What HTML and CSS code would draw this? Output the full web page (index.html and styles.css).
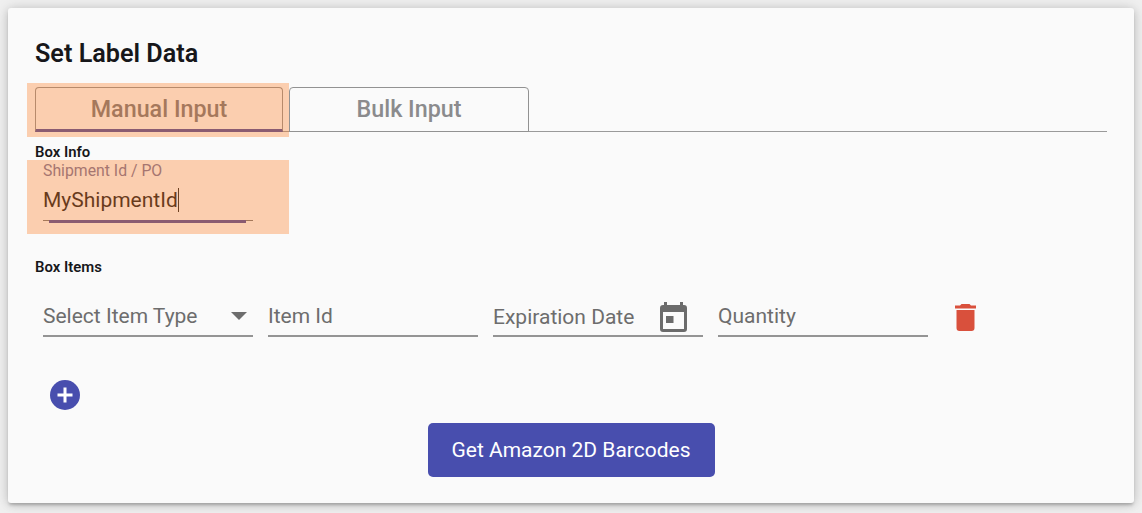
FILE: index.html
```
<!DOCTYPE html>
<html lang="en">
<head>
  <meta charset="utf-8">
  <title>Set Label Data</title>
  <link rel="stylesheet" href="styles.css">
</head>
<body>
  <main class="card">
    <h1>Set Label Data</h1>

    <div class="tabs">
      <div class="tab-slot highlight">
        <button type="button" class="tab active">Manual Input</button>
      </div>
      <button type="button" class="tab">Bulk Input</button>
    </div>

    <h2>Box Info</h2>
    <div class="shipment highlight">
      <span class="float-label">Shipment Id / PO</span>
      <div class="shipment-value"><span>MyShipmentId</span><i class="caret"></i></div>
      <div class="focus-line"></div>
    </div>

    <h2 class="items-title">Box Items</h2>
    <div class="item-row">
      <div class="field">
        <span>Select Item Type</span>
        <i class="arrow"></i>
      </div>
      <div class="field"><span>Item Id</span></div>
      <div class="field field-date">
        <span>Expiration Date</span>
        <svg class="calendar" viewBox="0 0 27 30">
          <path fill-rule="evenodd" d="M4 0h3v3h13V0h3v3h1a3 3 0 0 1 3 3v21a3 3 0 0 1-3 3H3a3 3 0 0 1-3-3V6a3 3 0 0 1 3-3h1zM3 10v17h21V10zM6 14h7.500v7H6z"/>
        </svg>
      </div>
      <div class="field"><span>Quantity</span></div>
      <svg class="trash" viewBox="0 0 21 27">
        <path d="M6.500 0h8l1.500 1.500h5v3H0v-3h5zM1.500 6h18v18a3 3 0 0 1-3 3h-12a3 3 0 0 1-3-3z"/>
      </svg>
    </div>

    <svg class="add" viewBox="0 0 30 30">
      <circle cx="15" cy="15" r="15"/>
      <path d="M15 7.500v15M7.500 15h15"/>
    </svg>

    <button type="button" class="submit">Get Amazon 2D Barcodes</button>
  </main>
</body>
</html>
```

FILE: styles.css
```
* {
  box-sizing: border-box;
}

body {
  margin: 0;
  height: 513px;
  padding: 8px;
  overflow: hidden;
  background-color: #f0f0f0;
  font-family: Roboto, "Liberation Sans", sans-serif;
  color: #17171a;
}

button {
  font-family: inherit;
  padding: 0;
}

.card {
  display: flex;
  flex-direction: column;
  align-items: flex-start;
  width: 1126px;
  height: 495px;
  padding: 30px 27px 0;
  background-color: #fafafa;
  border-radius: 3px;
  box-shadow: 0 3px 3px -1px rgba(0, 0, 0, 0.2), 0 2px 8px rgba(0, 0, 0, 0.14), 0 0 16px rgba(0, 0, 0, 0.12);
}

h1 {
  margin: 0;
  font-size: 25.200px;
  line-height: 32px;
  font-weight: 600;
}

h2 {
  margin: 11px 0 0;
  font-size: 14.900px;
  line-height: 18px;
  font-weight: 600;
}

/* Orange marker drawn over the steps to follow */
.highlight {
  position: relative;
}

.highlight::after {
  content: "";
  position: absolute;
  background-color: rgba(252, 122, 33, 0.35);
}

.tabs {
  display: flex;
  width: 1072px;
  height: 45px;
  margin-top: 17px;
  border-bottom: 1px solid #9a9a9a;
}

.tab-slot {
  width: 248px;
  margin-right: 6px;
}

.tab-slot::after {
  top: -4px;
  left: -8px;
  width: 262px;
  height: 54px;
}

.tab {
  width: 240px;
  height: 45px;
  padding-bottom: 1px;
  background-color: transparent;
  border: 1px solid #929292;
  border-radius: 4px 4px 0 0;
  color: #8b8b8d;
  font-size: 23.300px;
  font-weight: 500;
}

.active {
  width: 248px;
  padding-bottom: 0;
  border-bottom: 3px solid #4e4a9c;
  color: #77777b;
}

.shipment {
  width: 225px;
  height: 65px;
  padding-left: 8px;
}

.shipment::after {
  top: -1px;
  left: -8px;
  width: 262px;
  height: 74px;
}

.float-label {
  display: block;
  font-size: 15.800px;
  line-height: 20px;
  color: #77739a;
}

.shipment-value {
  display: flex;
  align-items: center;
  height: 39px;
  padding-bottom: 2px;
  font-size: 21px;
}

.caret {
  width: 1px;
  height: 24px;
  background-color: #222;
}

.focus-line {
  width: 210px;
  height: 1px;
  background-color: #777;
}

.focus-line::after {
  content: "";
  display: block;
  width: 197px;
  height: 3px;
  margin-left: 6px;
  background-color: #4e4a9c;
}

.items-title {
  margin-top: 32px;
}

.item-row {
  display: flex;
  gap: 15px;
  margin: 21px 0 0 8px;
}

.field {
  display: flex;
  align-items: center;
  justify-content: space-between;
  width: 210px;
  height: 40px;
  padding-bottom: 1px;
  border-bottom: 2px solid #949494;
  color: #6d6d6d;
  font-size: 21px;
}

.field-date {
  padding: 1px 0 0;
}

.arrow {
  margin-right: 6px;
  border: 8px solid transparent;
  border-top-color: #6d6d6d;
  border-bottom: 0;
}

.calendar {
  width: 27px;
  height: 30px;
  margin: 1px 16px 0 0;
  fill: #6b6b6b;
}

.trash {
  width: 21px;
  height: 27px;
  margin: 7px 0 0 12px;
  fill: #d9503c;
}

.add {
  width: 30px;
  height: 30px;
  margin: 43px 0 0 15px;
  fill: #484eae;
}

.add path {
  stroke: #fff;
  stroke-width: 3;
}

.submit {
  align-self: center;
  width: 287px;
  height: 54px;
  margin-top: 13px;
  background-color: #484eae;
  border: 0;
  border-radius: 5px;
  color: #fff;
  font-size: 21px;
}
```
